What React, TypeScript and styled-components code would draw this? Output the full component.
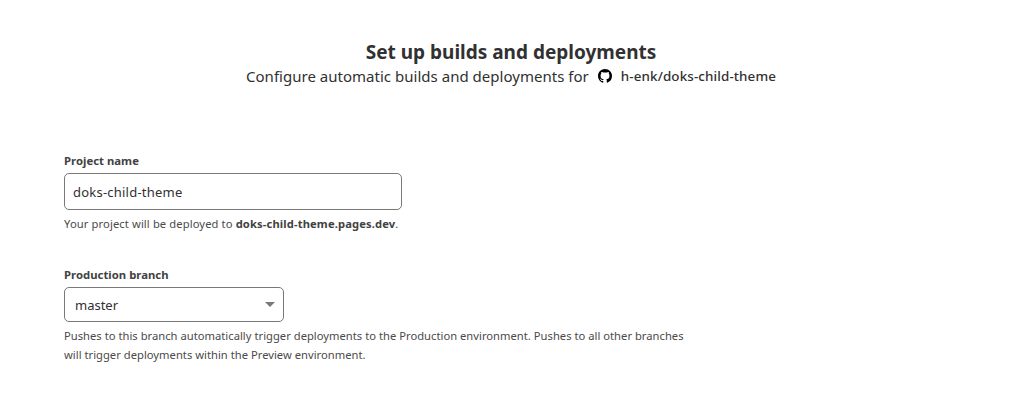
import React from "react";
import styled, { createGlobalStyle } from "styled-components";

const GlobalStyle = createGlobalStyle`
  body {
    margin: 0;
    background: #fff;
    color: #313131;
    font-family: "Segoe UI", "Noto Sans", "Open Sans", sans-serif;
  }
  *, *::before, *::after { box-sizing: border-box; }
`;

const Page = styled.main`
  min-height: 403px;
  padding: 40px 64px 0;
`;

const Header = styled.header`
  display: flex;
  flex-direction: column;
  align-items: center;
  white-space: nowrap;
`;

const Title = styled.h1`
  margin: 0;
  font-size: 19px;
  line-height: 24px;
  font-weight: 700;
`;

const Subtitle = styled.div`
  display: flex;
  align-items: center;
  height: 24px;
  font-size: 15px;
  line-height: 24px;
`;

const Description = styled.span`
  height: 25px;
  letter-spacing: 0.02px;
`;

const Repository = styled.span`
  display: inline-flex;
  align-items: center;
  gap: 9px;
  margin-left: 9px;
  font-size: 13.4px;
  font-weight: 500;
  letter-spacing: 0.12px;
`;

const Form = styled.form`
  display: flex;
  flex-direction: column;
  align-items: flex-start;
  gap: 32px;
  margin-top: 63px;
`;

const Field = styled.div`
  display: flex;
  flex-direction: column;
  align-items: flex-start;
`;

const Label = styled.label`
  height: 22px;
  color: #424242;
  font-size: 11.3px;
  line-height: 19px;
  font-weight: 700;
  letter-spacing: 0.03px;
`;

const Input = styled.input`
  width: 338px;
  height: 37px;
  padding: 0 8px;
  border: 1px solid #797979;
  border-radius: 5px;
  background: #fff;
  color: #313131;
  font: 400 13px/20px "Segoe UI", "Noto Sans", sans-serif;
  letter-spacing: 0.22px;
  outline: none;
`;

const Select = styled.button`
  display: flex;
  align-items: center;
  justify-content: space-between;
  width: 220px;
  height: 35px;
  padding: 0 8px 0 10px;
  border: 1px solid #797979;
  border-radius: 5px;
  background: #fff;
  color: #313131;
  font: 400 13px/20px "Segoe UI", "Noto Sans", sans-serif;
`;

const Caret = styled.span`
  border: 5px solid transparent;
  border-top-color: #797979;
  border-bottom: 0;
  margin-bottom: 1px;
`;

const Help = styled.p<{ $spacing: number }>`
  margin: 4px 0 0;
  color: #4a4a4a;
  font-size: 11.2px;
  line-height: 19px;
  letter-spacing: ${({ $spacing }) => $spacing}px;
  white-space: nowrap;

  b {
    color: #424242;
    font-weight: 700;
    letter-spacing: 0.13px;
  }
`;

function GitHubMark() {
  return (
    <svg width="14" height="14" viewBox="0 0 16 16" fill="#000" aria-hidden="true">
      <path d="M8 0C3.58 0 0 3.58 0 8c0 3.54 2.29 6.53 5.47 7.59.4.07.55-.17.55-.38 0-.19-.01-.82-.01-1.49-2.01.37-2.53-.49-2.69-.94-.09-.23-.48-.94-.82-1.13-.28-.15-.68-.52-.01-.53.63-.01 1.08.58 1.23.82.72 1.21 1.87.87 2.33.66.07-.52.28-.87.51-1.07-1.78-.2-3.64-.89-3.64-3.95 0-.87.31-1.59.82-2.15-.08-.2-.36-1.02.08-2.12 0 0 .67-.21 2.2.82.64-.18 1.32-.27 2-.27s1.36.09 2 .27c1.53-1.04 2.2-.82 2.2-.82.44 1.1.16 1.92.08 2.12.51.56.82 1.27.82 2.15 0 3.07-1.87 3.75-3.65 3.95.29.25.54.73.54 1.48 0 1.07-.01 1.93-.01 2.2 0 .21.15.46.55.38A8.01 8.01 0 0 0 16 8c0-4.42-3.58-8-8-8Z" />
    </svg>
  );
}

export default function App() {
  return (
    <>
      <GlobalStyle />
      <Page>
        <Header>
          <Title>Set up builds and deployments</Title>
          <Subtitle>
            <Description>Configure automatic builds and deployments for</Description>
            <Repository>
              <GitHubMark />
              <span>h-enk/doks-child-theme</span>
            </Repository>
          </Subtitle>
        </Header>
        <Form>
          <Field>
            <Label htmlFor="project">Project name</Label>
            <Input id="project" defaultValue="doks-child-theme" />
            <Help $spacing={0.11}>
              Your project will be deployed to <b>doks-child-theme.pages.dev</b>.
            </Help>
          </Field>
          <Field>
            <Label htmlFor="branch">Production branch</Label>
            <Select id="branch" type="button">
              master
              <Caret />
            </Select>
            <Help $spacing={0.02}>
              Pushes to this branch automatically trigger deployments to the Production environment. Pushes to all other branches
              <br />
              will trigger deployments within the Preview environment.
            </Help>
          </Field>
        </Form>
      </Page>
    </>
  );
}
